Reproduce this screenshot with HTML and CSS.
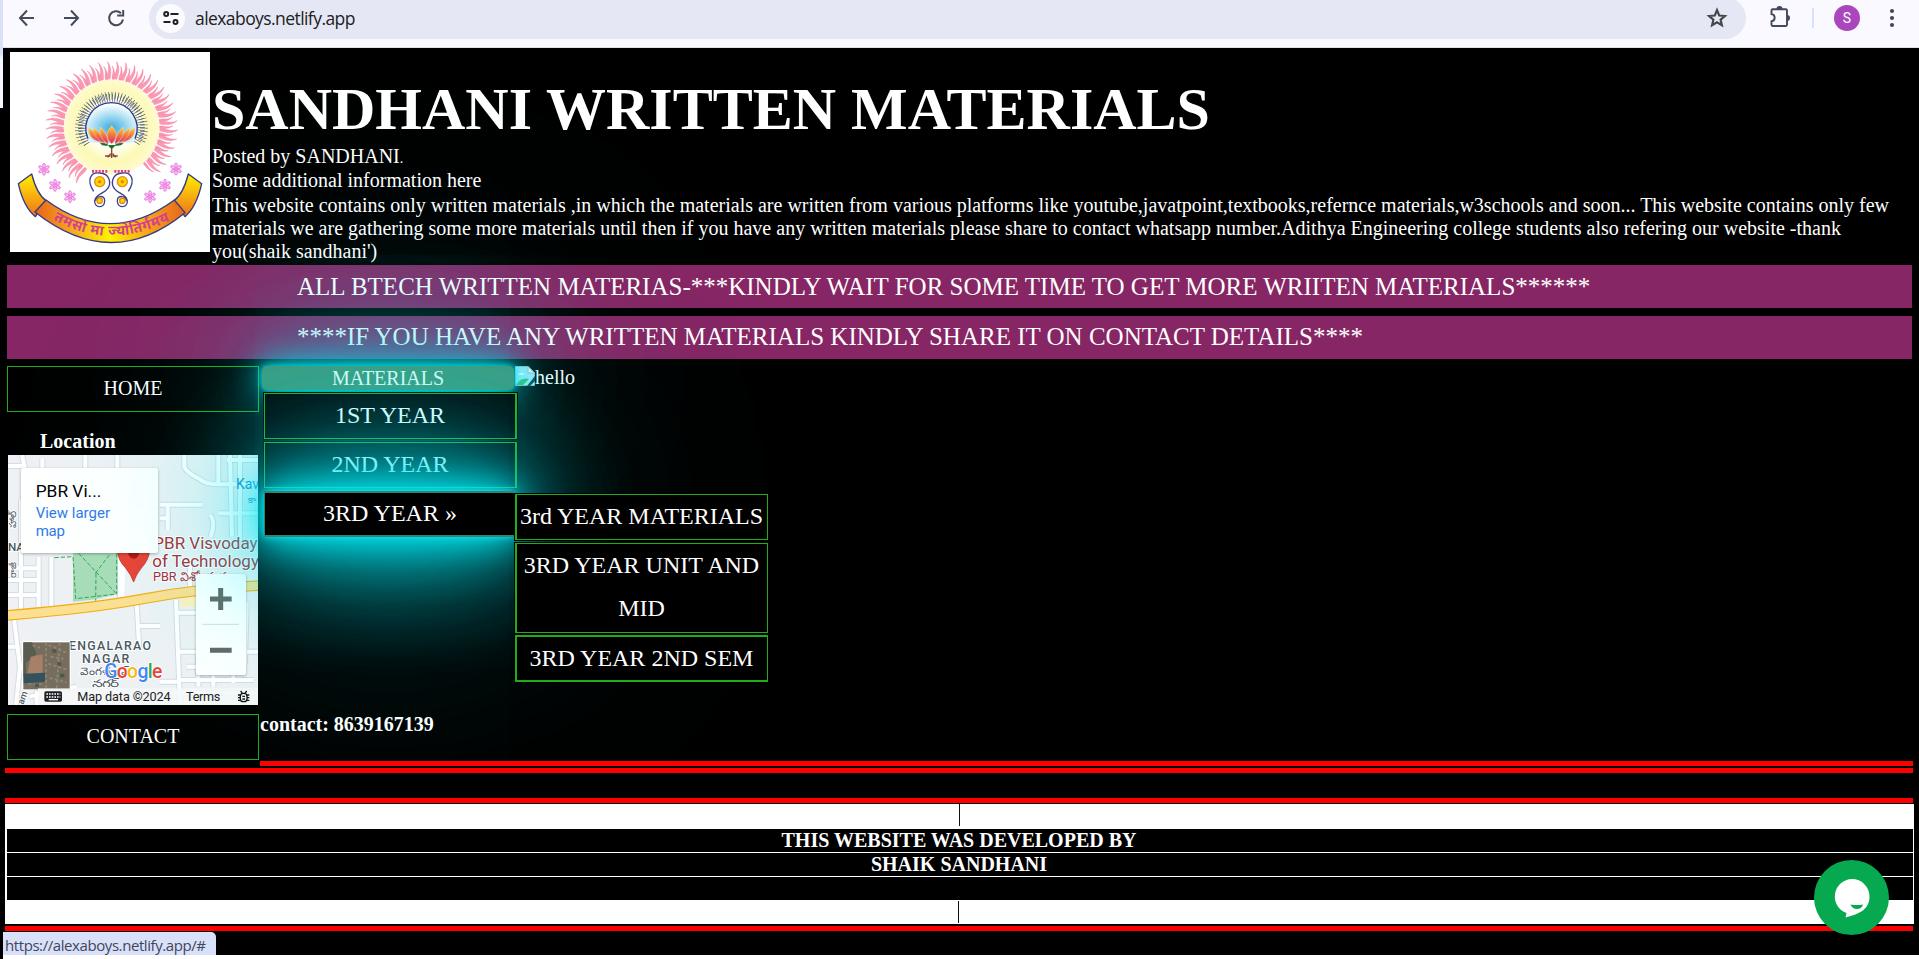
FILE: index.html
```html
<!DOCTYPE html>
<html lang="en">
<head>
<meta charset="utf-8">
<title>SANDHANI WRITTEN MATERIALS</title>
<link rel="stylesheet" href="styles.css">
</head>
<body>
<div class="window">
  <div class="toolbar">
    <svg class="nav-icons" width="146" height="39" viewBox="0 0 146 39" fill="none" stroke="#474b59" stroke-width="2">
      <path d="M34 18H20M27 10.500l-7 7.500 7 7.500M64 18h14M71 10.500l7 7.500-7 7.500"/>
      <path d="M121 13.200a7 7 0 1 0 2 6.300M123.200 10v5.500h-6"/>
    </svg>
    <div class="omnibox">
      <span class="site-info">
        <svg width="16" height="16" viewBox="0 0 16 16" fill="none" stroke="#1f2023" stroke-width="2"><circle cx="3.200" cy="4" r="2"/><path d="M7.500 4h8M.500 12h7"/><circle cx="12.500" cy="12" r="2"/></svg>
      </span>
      <span class="url">alexaboys.netlify.app</span>
      <svg class="star" width="22" height="22" viewBox="0 0 22 22" fill="none" stroke="#45474d" stroke-width="2.200"><path d="M11 3.200l2.200 5.300 5.700.5-4.300 3.700 1.300 5.600-4.900-3-4.900 3 1.300-5.600L3.100 9l5.700-.5z"/></svg>
    </div>
    <svg class="puzzle" width="24" height="24" viewBox="0 0 24 24"><path d="M3.500 5.500q0-1.200 1.200-1.200h13.100q1.200 0 1.200 1.200v14.300q0 1.200-1.200 1.200H4.700q-1.200 0-1.200-1.200v-3.500c4.200-.5 4.200-6.700 0-7.200z" fill="none" stroke="#43485a" stroke-width="1.900"/><path d="M8.500 4a3 3 0 0 1 6 0zM19 10a3 3 0 0 1 0 6z" fill="#43485a"/></svg>
    <span class="divider"></span>
    <span class="avatar">S</span>
    <svg class="dots" width="6" height="20" viewBox="0 0 6 20" fill="#43485a"><circle cx="3" cy="3" r="2.100"/><circle cx="3" cy="10" r="2.100"/><circle cx="3" cy="17" r="2.100"/></svg>
  </div>

  <div class="page">
    <header class="header">
      <svg class="logo" viewBox="30 36 600 600" width="200" height="200">
        <defs>
          <radialGradient id="halo"><stop offset=".45" stop-color="#fffff4"/><stop offset=".72" stop-color="#fcf8b4"/><stop offset="1" stop-color="#fffbd0"/></radialGradient>
          <radialGradient id="sky" cx=".5" cy=".65" r=".6"><stop offset="0" stop-color="#38a9df"/><stop offset=".55" stop-color="#a5dcf2"/><stop offset="1" stop-color="#fff"/></radialGradient>
          <linearGradient id="ribbon"><stop offset="0" stop-color="#e8641c"/><stop offset=".28" stop-color="#f7b21e"/><stop offset=".5" stop-color="#fff200"/><stop offset=".75" stop-color="#f9a51c"/><stop offset="1" stop-color="#e8641c"/></linearGradient>
          <linearGradient id="tail" x1="0" y1="0" x2="0" y2="1"><stop offset="0" stop-color="#fff200"/><stop offset="1" stop-color="#f0701c"/></linearGradient>
          <linearGradient id="petal" x1="0" y1="0" x2="0" y2="1"><stop offset="0" stop-color="#ffd23c"/><stop offset=".4" stop-color="#f48a3c"/><stop offset="1" stop-color="#e0246c"/></linearGradient>
          <g id="f1"><path d="M328 118C324 98 338 92 329 64C342 82 339 98 335 118M342 119C339 104 350 98 343 78C352 92 350 106 347 119" fill="#fb9ab5" stroke="#f0698f" stroke-width="1"/></g>
          <g id="f2"><use href="#f1"/><use href="#f1" transform="rotate(8 335 262)"/></g>
          <g id="f4"><use href="#f2"/><use href="#f2" transform="rotate(16 335 262)"/></g>
          <g id="f8"><use href="#f4"/><use href="#f4" transform="rotate(32 335 262)"/></g>
          <g id="star5" fill="#fbc5f4" stroke="#e86fdc" stroke-width="2.500"><ellipse cy="-11" rx="4" ry="7"/><ellipse cy="-11" rx="4" ry="7" transform="rotate(60)"/><ellipse cy="-11" rx="4" ry="7" transform="rotate(120)"/><ellipse cy="-11" rx="4" ry="7" transform="rotate(180)"/><ellipse cy="-11" rx="4" ry="7" transform="rotate(240)"/><ellipse cy="-11" rx="4" ry="7" transform="rotate(300)"/><circle r="3"/></g>
          <path id="motto" d="M160 539Q330 634 512 540"/>
        </defs>
        <rect x="30" y="36" width="600" height="600" fill="#fff"/>
        <circle cx="335" cy="262" r="143" fill="url(#halo)"/>
        <use href="#f8" transform="rotate(-146 335 262)"/><use href="#f8" transform="rotate(-82 335 262)"/><use href="#f8" transform="rotate(-18 335 262)"/><use href="#f8" transform="rotate(46 335 262)"/><use href="#f4" transform="rotate(110 335 262)"/>
        <path d="M262 311A88 88 0 1 1 407 311" fill="none" stroke="#3d477e" stroke-width="24" stroke-dasharray="2 6"/>
        <path d="M247 309A98 98 0 1 1 422 309" fill="none" stroke="#536084" stroke-width="23" stroke-dasharray="2 7.500"/>
        <path d="M270 308A78 78 0 1 1 400 308Z" fill="url(#sky)"/>
        <path d="M264 296A77 77 0 1 1 405 296" fill="none" stroke="#273c91" stroke-width="4"/>
        <g fill="url(#petal)" stroke="#f7d9a0" stroke-width="1.500">
          <path d="M310 308Q263 300 265 263Q296 280 310 308M360 308Q407 300 405 263Q374 280 360 308"/>
          <path d="M315 309Q279 297 280 263Q307 280 315 309M355 309Q391 297 390 263Q363 280 355 309"/>
          <path d="M322 311Q294 292 301 261Q324 282 325 311M348 311Q376 292 369 261Q346 282 345 311"/>
          <path d="M335 312Q307 285 335 257Q363 285 335 312"/>
        </g>
        <path d="M299 310q17-4 28 6-17 5-28-6M371 310q-17-4-28 6 17 5 28-6M322 315l13 13 13-13z" fill="#16752b"/>
        <path d="M335 325v29M315 348h17M338 348h15M332 341l-9 11M338 341l9 11" stroke="#8c4132" stroke-width="4" fill="none"/>
        <g id="foot" fill="none" stroke="#3a3f92" stroke-width="4"><path d="M281 454C259 421 271 395 299 399C329 400 337 431 320 449C311 460 286 464 284 482C282 506 314 506 314 482C314 463 289 468 287 482"/><circle cx="299" cy="425" r="15" fill="#ffd400" stroke="#e08f15"/><circle cx="299" cy="425" r="5" fill="#ef7c1b" stroke="none"/><circle cx="299" cy="482" r="8" fill="#ffd400" stroke="#e08f15"/></g>
        <use href="#foot" transform="matrix(-1 0 0 1 666 0)"/>
        <path d="M276 394h50M343 394h50" stroke="#e0368d" stroke-width="8" stroke-dasharray="6 4"/>
        <use href="#star5" x="132" y="388"/><use href="#star5" x="165" y="436"/><use href="#star5" x="210" y="470"/><use href="#star5" x="528" y="387"/><use href="#star5" x="495" y="436"/><use href="#star5" x="450" y="470"/>
        <g stroke="#353b83" stroke-width="4" stroke-linejoin="round">
          <path d="M55 431L95 402Q111 463 138 482L106 530Q70 500 55 431Z" fill="url(#tail)"/>
          <path d="M605 431L565 402Q549 463 522 482L555 530Q590 500 605 431Z" fill="url(#tail)"/>
          <path d="M138 480Q330 622 523 480L555 518Q335 698 105 516Z" fill="url(#ribbon)"/>
        </g>
        <text class="motto"><textPath href="#motto" textLength="366">तमसो मा ज्योतिर्गमय</textPath></text>
      </svg>
      <div class="intro">
        <h1>SANDHANI WRITTEN MATERIALS</h1>
        <p>Posted by SANDHANI<small>.</small></p>
        <p class="extra">Some additional information here</p>
        <p>This website contains only written materials ,in which the materials are written from various platforms like youtube,javatpoint,textbooks,refernce materials,w3schools and soon... This website contains only few<br>materials we are gathering some more materials until then if you have any written materials please share to contact whatsapp number.Adithya Engineering college students also refering our website -thank<br>you(shaik sandhani')</p>
      </div>
    </header>

    <div class="banner">ALL BTECH WRITTEN MATERIAS-***KINDLY WAIT FOR SOME TIME TO GET MORE WRIITEN MATERIALS******</div>
    <div class="banner lower-banner">****IF YOU HAVE ANY WRITTEN MATERIALS KINDLY SHARE IT ON CONTACT DETAILS****</div>

    <main class="main">
      <aside class="side">
        <a class="side-link">HOME</a>
        <h2>Location</h2>
        <svg class="map" viewBox="24 15 750 750" width="250" height="250">
          <rect x="24" y="15" width="750" height="750" fill="#eff1f4"/>
          <g fill="none" stroke="#d6dce1" stroke-width="18">
            <path id="roads" d="M24 48H70M66 15L76 60M127 25V70M128 70H260M256 15V70M352 15V70M360 305V450M553 15V50Q556 66 600 88Q616 103 655 103V15M478 164H606M503 164V240M478 205H503M630 195Q648 215 632 262M720 15V270M690 15L696 260M655 103H774M655 190H774M680 30H774M24 355H110M116 320V470M154 320V470M63 150V480M24 390H116M24 435H120M42 505L60 650L48 765M24 590H50M410 460L418 600M412 528H480M528 450L540 765M530 488H620M536 605H774M540 690H760M595 590V710M640 590V710M700 630V700M560 650H690M740 455L735 640M478 695H540M480 730H774M90 740L230 710M570 330V420M110 765V730L210 765M330 720V765"/>
          </g>
          <use href="#roads" class="road-fill"/>
          <path d="M355 300H378L372 450H355Z" fill="#fff"/>
          <path d="M219 300H352V432L287 448L219 455Z" fill="#a9dcb8"/>
          <path d="M163 323L219 320L227 446L350 432M236 310L348 430M286 370L332 310M288 370L287 452M350 310V430" fill="none" stroke="#34a853" stroke-width="3" stroke-dasharray="13 6"/>
          <path d="M540 430L650 420V470H540Z" fill="#fff0bd"/>
          <path d="M24 496Q280 475 440 445T774 407" stroke="#f3ac13" stroke-width="32" fill="none"/><path d="M24 496Q280 475 440 445T774 407" stroke="#fde092" stroke-width="25" fill="none"/>
          <g class="map-red"><text x="460" y="297">PBR Visvoday</text><text x="457" y="350">of Technology</text><text x="459" y="393" font-size="38">PBR విశ్వోదయ</text></g>
          <path d="M352 300H449Q448 328 424 354Q407 376 401 396Q394 376 377 354Q353 330 352 300Z" fill="#ea4335" stroke="#b8241b" stroke-width="2"/><circle cx="401" cy="310" r="16" fill="#ae1616"/>
          <text x="708" y="117" font-size="42" fill="#1680d0">Kav</text><text x="745" y="158" font-size="28" fill="#1680d0">కా</text>
          <g class="map-area"><text x="207" y="601" textLength="246">ENGALARAO</text><text x="246" y="639" textLength="142">NAGAR</text><text x="241" y="675" font-size="32" textLength="148" lengthAdjust="spacingAndGlyphs">వెంగళరావ్</text><text x="275" y="711" font-size="32" textLength="82" lengthAdjust="spacingAndGlyphs">నగర్</text><text x="24" y="304" font-size="35">NA</text><text transform="translate(48 235) rotate(-90)" font-size="30">హాల్</text><text transform="translate(48 384) rotate(-90)" font-size="28">రాజీ</text><text transform="translate(70 765) rotate(-70)" font-size="28">am</text></g>
          <rect class="lift" x="63" y="54" width="411" height="255" rx="6" fill="#fff"/>
          <text x="107" y="140" font-size="52" textLength="197" lengthAdjust="spacingAndGlyphs">PBR Vi...</text>
          <g fill="#2f7be8" font-size="45"><text x="107" y="204" textLength="223">View larger</text><text x="107" y="259" textLength="88">map</text></g>
          <rect class="lift" x="588" y="372" width="150" height="303" rx="6" fill="#fff"/>
          <path d="M630 447H695M662 414V480M630 601H695" stroke="#666" stroke-width="15"/><path d="M606 523H717" stroke="#dadce0" stroke-width="3"/>
          <rect x="66" y="573" width="146" height="148" rx="7" fill="#fff"/><rect x="70" y="577" width="139" height="141" fill="#766e5f"/>
          <path d="M70 577H96L110 612L78 638V680H70Z" fill="#595d51"/><path d="M92 620L128 613V674H82Z" fill="#a87f68"/><path d="M71 671L135 668V696L71 700Z" fill="#34525d"/><path d="M98 586L120 593M146 585L199 608M152 620L190 626M145 641L203 660M149 684L199 697M85 702H130M138 578V718M179 578L170 718" stroke="#968670" stroke-width="5" stroke-dasharray="9 7"/><path d="M157 603h12M172 642h12M180 677h13M105 706h11" stroke="#50584f" stroke-width="11"/>
          <rect x="114" y="715" width="660" height="50" fill="#f7f8f8" opacity=".85"/>
          <text class="google" x="313" y="685" textLength="174"><tspan fill="#4285f4">G</tspan><tspan fill="#ea4335">o</tspan><tspan fill="#fbbc04">o</tspan><tspan fill="#4285f4">g</tspan><tspan fill="#34a853">l</tspan><tspan fill="#ea4335">e</tspan></text>
          <rect x="133" y="724" width="53" height="31" rx="5" fill="#202124"/><path d="M139 732H181M139 741H181" stroke="#fff" stroke-width="4" stroke-dasharray="5 3"/><path d="M146 749H174" stroke="#fff" stroke-width="4"/>
          <g font-size="38" fill="#222"><text x="232" y="752" textLength="280">Map data ©2024</text><text x="558" y="752" textLength="103">Terms</text></g>
          <g fill="none" stroke="#111" stroke-width="4"><rect x="721" y="730" width="20" height="25" rx="9"/><path d="M714 735h7M714 743h7M714 751h7M741 735h7M741 743h7M741 751h7M722 723l5 7M740 723l-5 7M727 739h8M727 747h8"/></g>
        </svg>
        <a class="side-link contact-link">CONTACT</a>
      </aside>

      <section class="content">
        <div class="content-top">
          <nav class="menu">
            <a class="menu-title">MATERIALS</a>
            <div class="dropdown">
              <a class="item">1ST YEAR</a>
              <a class="item">2ND YEAR</a>
              <a class="item active">3RD YEAR »</a>
              <div class="submenu">
                <a class="item">3rd YEAR MATERIALS</a>
                <a class="item">3RD YEAR UNIT AND MID</a>
                <a class="item last">3RD YEAR 2ND SEM</a>
              </div>
            </div>
          </nav>
          <div class="picture">
            <svg width="20" height="20" viewBox="0 0 20 20"><path d="M0 .500H13L19.500 7V19.500H.500Z" fill="#b9e5fa" stroke="#a6b4bb"/><path d="M13 .500V7H19.500Z" fill="#fff" stroke="#a6b4bb"/><path d="M3 9q1-3 4-2 3 0 2 2z" fill="#fff"/><path d="M1 19q5-8 13-6l-6 6z" fill="#43b65b"/><path d="M12 20L20 10V15L15 20Z" fill="#063b3c"/></svg><span>hello</span>
          </div>
        </div>
        <div class="phone">contact: 8639167139</div>
      </section>
    </main>

    <div class="rule"></div>
    <div class="rule second"></div>
    <footer class="credits">
      <div class="strip"><i></i></div>
      <div class="credit">THIS WEBSITE WAS DEVELOPED BY</div>
      <div class="credit">SHAIK SANDHANI</div>
      <div class="credit empty"></div>
      <div class="strip lower"><i></i></div>
    </footer>
    <div class="rule third"></div>
  </div>

  <div class="status">https://alexaboys.netlify.app/#</div>
  <div class="edge"></div>
  <div class="chat">
    <svg width="75" height="75" viewBox="0 0 75 75"><path d="M38 19a17.500 17.500 0 0 1 17.500 17.500C55.500 49 46 54 31.500 57.500L32.500 53A17.500 17.500 0 0 1 38 19Z" fill="#fff"/><path d="M36.500 44.500Q43 45.500 49 44.500Q47.500 49 43 49T36.500 44.500Z" fill="#06a94f"/></svg>
  </div>
</div>
</body>
</html>
```
FILE: styles.css
```css
* { box-sizing: border-box; }
body { margin: 0; background: #fff; }
.window {
  position: relative;
  width: 1919px;
  height: 959px;
  overflow: hidden;
  background: #fff;
  color: #fff;
  font: 20px/23px "Liberation Serif", "Times New Roman", serif;
}
svg { display: block; flex: none; }

/* browser toolbar */
.toolbar {
  position: relative;
  z-index: 5;
  display: flex;
  align-items: flex-start;
  height: 48px;
  padding-left: 3px;
  background: #f9f9ff;
  border-bottom: 1px solid #dde3e3;
}
.nav-icons { margin-left: -3px; }
.omnibox {
  display: flex;
  align-items: center;
  width: 1597px;
  height: 42px;
  margin: -3px 0 0 3px;
  padding-left: 7px;
  border-radius: 21px;
  background: #e5e8f4;
}
.site-info {
  display: grid;
  place-items: center;
  width: 29px;
  height: 29px;
  border-radius: 50%;
  background: #fbfbff;
}
.url {
  margin-left: 10px;
  color: #202124;
  font: 17.500px/24px "Open Sans", "Noto Sans", sans-serif;
  letter-spacing: -.57px;
}
.star { margin: 0 18px 0 auto; }
.puzzle { margin: 5px 0 0 22px; }
.divider { width: 2px; height: 20px; margin: 8px 0 0 20px; background: #d5e2fb; }
.avatar {
  width: 26px;
  height: 26px;
  margin: 5px 0 0 20px;
  border-radius: 50%;
  background: #ab47bc;
  font: 14px/26px Roboto, sans-serif;
  text-align: center;
}
.dots { margin: 8px 0 0 29px; }

/* page */
.page {
  position: relative;
  height: 907px;
  margin-left: 3px;
  padding: 4px 5px 0 2px;
  background: #000;
}
.header { display: flex; height: 213px; padding-left: 5px; }
.motto { fill: #d43f91; font: 700 42px "Noto Sans", sans-serif; }
.intro { margin-left: 2px; padding-top: 23px; white-space: nowrap; }
h1 { margin: 0 0 1px; font-size: 60px; line-height: 69px; }
p { margin: 0; }
.intro small { font-size: 14px; line-height: 1; }
.extra { margin: 1px 0 2px; }
.banner {
  height: 43px;
  margin: 0 2px 8px;
  padding-left: 290px;
  background: #872664;
  font-size: 25px;
  line-height: 43px;
  white-space: nowrap;
}
.lower-banner { margin-bottom: 7px; line-height: 42px; }
.main { display: flex; height: 400px; }
.side { width: 255px; padding: 0 1px 0 2px; }
.side-link {
  display: block;
  width: 252px;
  height: 46px;
  padding-top: 10px;
  border: 1px solid #20ad18;
  text-align: center;
}
.contact-link { position: relative; z-index: 2; margin-top: 9px; background: #000; }
h2 { margin: 18px 0 2px 33px; font-size: 20px; line-height: 23px; }
.map { margin-left: 1px; font-family: Roboto, sans-serif; }
.road-fill { fill: none; stroke: #fff; stroke-width: 12px; }
.map-red { fill: #ad2b32; font-size: 51px; stroke: #fff; stroke-width: 6px; paint-order: stroke; }
.map-area { fill: #4b5860; font-size: 37px; font-weight: 500; stroke: #fff; stroke-width: 6px; paint-order: stroke; }
.lift { filter: drop-shadow(0 3px 5px rgba(0, 0, 0, .3)); }
.google { font: 500 58px Roboto, sans-serif; stroke: #fff; stroke-width: 5px; paint-order: stroke; }

.content { width: 1653px; height: 400px; border-bottom: 5px solid #f00; }
.content-top { display: flex; height: 347px; }
.menu { position: relative; width: 255px; padding: 0 1px 0 2px; }
.menu-title {
  position: relative;
  z-index: 1;
  display: block;
  height: 24px;
  border-radius: 5px;
  background: #3c9b80;
  box-shadow: 0 0 6px #03e9f4, 0 0 31px #03e9f4, 0 0 62px #03e9f4aa, 0 0 125px #03e9f4, 0 0 250px #03e9f4;
  color: #e2fbf6;
  line-height: 24px;
  text-align: center;
}
.dropdown { position: absolute; left: 4px; top: 27px; width: 253px; }
.item {
  display: block;
  height: 46px;
  margin-bottom: 3px;
  border: 1px solid #20ad18;
  border-right-width: 2px;
  outline: 1px solid #000;
  font-size: 24px;
  line-height: 43px;
  text-align: center;
}
.dropdown > .item:not(.active) { position: relative; z-index: 2; background: #000; }
.item.active {
  position: relative;
  z-index: 3;
  width: 250px;
  padding-left: 1px;
  border: solid #35836c;
  border-width: 2px 0 2px 1px;
  outline: 0;
  background: #000;
  box-shadow: 0 0 6px #03e9f4, 0 0 31px #03e9f4, 0 0 62px #03e9f4, 0 0 125px #03e9f4, 0 0 125px #03e9f4, 0 0 250px #03e9f4;
  line-height: 41px;
}
.submenu { position: absolute; z-index: 4; left: 251px; top: 101px; width: 253px; }
.submenu .item { padding-right: 1px; border-width: 1px 1px 1px 2px; background: #000; }
.submenu .item:nth-child(2) { height: 90px; }
.submenu .last { height: 47px; margin-top: -1px; border-top-width: 2px; border-bottom-width: 2px; }
.picture { display: flex; align-items: flex-start; }
.phone { position: relative; z-index: 2; font-weight: 700; }
.rule { position: relative; z-index: 2; height: 5px; margin: 2px 1px 0 0; background: #f00; }
.second { margin-top: 25px; }
.third { margin-top: 2px; }
.credits {
  position: relative;
  z-index: 2;
  height: 120px;
  margin-top: 1px;
  border: solid #fff;
  border-width: 0 1px 0 2px;
  background: #000;
}
.strip { display: flex; justify-content: center; height: 25px; padding-right: 1px; background: #fff; }
.strip i { width: 1px; height: 22px; background: #111; }
.lower { height: 24px; padding: 1px 4px 0 0; }
.credit { height: 24px; padding-right: 2px; border-bottom: 1px solid #fff; font-weight: 700; text-align: center; }
.empty { height: 23px; border: 0; }

/* floating elements over the page */
.status {
  position: absolute;
  z-index: 5;
  left: 3px;
  top: 932px;
  width: 213px;
  height: 23px;
  padding-left: 2px;
  border-top-right-radius: 5px;
  background: #d9e1fa;
  color: #42465a;
  font: 15px/27px "Open Sans", "Noto Sans", sans-serif;
  letter-spacing: -.42px;
  white-space: nowrap;
}
.edge {
  position: absolute;
  z-index: 6;
  left: 0;
  top: 0;
  width: 3px;
  height: 959px;
  background: linear-gradient(#d9e1fa 0 54px, #f5f7ff 58px 108px, #000 108px);
}
.chat {
  position: absolute;
  z-index: 5;
  left: 1814px;
  top: 860px;
  width: 75px;
  height: 75px;
  border-radius: 50%;
  background: #06a94f;
}
```
